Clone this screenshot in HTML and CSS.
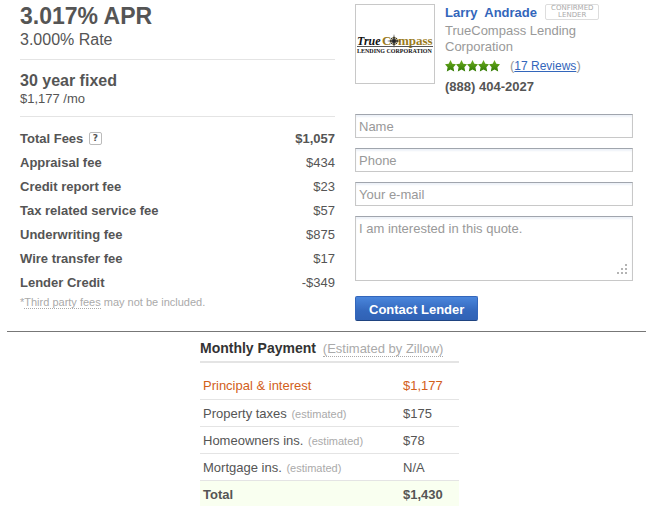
FILE: index.html
```html
<!DOCTYPE html>
<html lang="en">
	<head>
		<meta charset="utf-8">
		<title>Loan quote</title>
		<link rel="stylesheet" href="styles.css">
	</head>
	<body>
		<div class="quote">
			<!-- rate and fees -->
			<div class="loan">
				<div class="rate-box">
					<h1 class="apr">3.017% APR</h1>
					<div class="rate">3.000% Rate</div>
				</div>
				<div class="term-box">
					<h2 class="term">30 year fixed</h2>
					<div class="permonth">$1,177 /mo</div>
				</div>
				<table class="fees">
					<tr class="fees-total"><th scope="row">Total Fees <button type="button" class="help">?</button></th><td>$1,057</td></tr>
					<tr><th scope="row">Appraisal fee</th><td>$434</td></tr>
					<tr><th scope="row">Credit report fee</th><td>$23</td></tr>
					<tr><th scope="row">Tax related service fee</th><td>$57</td></tr>
					<tr><th scope="row">Underwriting fee</th><td>$875</td></tr>
					<tr><th scope="row">Wire transfer fee</th><td>$17</td></tr>
					<tr><th scope="row">Lender Credit</th><td>-$349</td></tr>
				</table>
				<div class="note">*<span class="tip">Third party fees</span> may not be included.</div>
			</div>

			<!-- lender and contact form -->
			<div class="contact">
				<div class="lender">
					<div class="logo">
						<svg width="78" height="78" viewBox="0 0 78 78" role="img" aria-label="TrueCompass Lending Corporation">
							<text class="logo-true" x="1" y="40">True</text>
							<text class="logo-compass" x="26" y="40">C</text>
							<text class="logo-compass" x="42" y="40">mpass</text>
							<circle cx="38" cy="36" r="3.5" fill="none" stroke="#6b5a20"/>
							<path d="M38 29l1 6 6 1-6 1-1 6-1-6-6-1 6-1z" fill="#222"/>
							<path d="M35 33l6 6M41 33l-6 6" stroke="#222" stroke-width="0.7"/>
							<path d="M1 41.5h76" stroke="#555"/>
							<text class="logo-sub" x="1" y="48">LENDING CORPORATION</text>
						</svg>
					</div>
					<div class="lender-info">
						<div class="name-row">
							<a class="name" href="#">Larry&nbsp; Andrade</a>
							<span class="confirmed">CONFIRMED<br>LENDER</span>
						</div>
						<div class="company">TrueCompass Lending Corporation</div>
						<div class="rating">
							<svg width="55" height="12" viewBox="0 0 55 12" role="img" aria-label="5 stars">
								<defs>
									<linearGradient id="green" x1="0" y1="0" x2="0" y2="1">
										<stop offset="0" stop-color="#6fae22"/>
										<stop offset="1" stop-color="#2f7a00"/>
									</linearGradient>
									<path id="star" d="M5.5 0L7.3 3.8 11 4.3 8.4 7.2 9.2 11.6 5.5 9.6 1.8 11.6 2.6 7.2 0 4.3 3.7 3.8z" fill="url(#green)"/>
								</defs>
								<use href="#star"/>
								<use href="#star" x="11"/>
								<use href="#star" x="22"/>
								<use href="#star" x="33"/>
								<use href="#star" x="44"/>
							</svg>
							<span class="reviews">(<a href="#">17 Reviews</a>)</span>
						</div>
						<div class="tel">(888) 404-2027</div>
					</div>
				</div>
				<form class="form">
					<input type="text" placeholder="Name" aria-label="Name">
					<input type="tel" placeholder="Phone" aria-label="Phone">
					<input type="email" placeholder="Your e-mail" aria-label="Your e-mail">
					<div class="message">
						<textarea aria-label="Message">I am interested in this quote.</textarea>
						<svg class="grip" width="10" height="10" viewBox="0 0 10 10" aria-hidden="true">
							<path d="M8 0h2v2h-2zM4 4h2v2h-2zM8 4h2v2h-2zM0 8h2v2h-2zM4 8h2v2h-2zM8 8h2v2h-2z" fill="#b4b4b4"/>
						</svg>
					</div>
					<button type="button" class="send">Contact Lender</button>
				</form>
			</div>
		</div>

		<!-- monthly payment -->
		<div class="monthly">
			<div class="payment">
				<h2 class="payment-title">Monthly Payment <span class="tip">(Estimated by Zillow)</span></h2>
				<table class="payments">
					<tr class="principal"><td>Principal &amp; interest</td><td>$1,177</td></tr>
					<tr><td>Property taxes <small>(estimated)</small></td><td>$175</td></tr>
					<tr><td>Homeowners ins. <small>(estimated)</small></td><td>$78</td></tr>
					<tr><td>Mortgage ins. <small>(estimated)</small></td><td>N/A</td></tr>
					<tr class="total"><td>Total</td><td>$1,430</td></tr>
				</table>
			</div>
		</div>
	</body>
</html>
```

FILE: styles.css
```css
*{
	box-sizing: border-box;
}
body{
	margin: 0;
	background: #fff;
	color: #555;
	font: 13px/16px "Liberation Sans", Arial, sans-serif;
}
h1,h2{
	margin: 0;
}
table{
	width: 100%;
	border-collapse: collapse;
}
a{
	color: #36b;
}

.quote{
	display: grid;
	grid-template-columns: 315fr 278fr;
	gap: 20px;
	padding: 4px 22px 10px 20px;
}

/* left column */
.rate-box{
	padding-bottom: 7px;
	border-bottom: 1px solid #e4e4e4;
}
.apr{
	font-size: 23px;
	line-height: 24px;
}
.rate{
	font-size: 16px;
	line-height: 24px;
}
.term-box{
	padding: 12px 0 9px;
	border-bottom: 1px solid #e4e4e4;
}
.term{
	font-size: 16px;
	line-height: 18px;
}
.permonth{
	line-height: 17px;
}
.fees{
	margin-top: 10px;
}
.fees th,.fees td{
	height: 24px;
	padding: 0;
	text-align: left;
}
.fees td{
	text-align: right;
}
.fees-total td{
	font-weight: bold;
}
.help{
	width: 13px;
	height: 13px;
	margin-left: 2px;
	padding: 0;
	border: 1px solid #bbb;
	border-radius: 2px;
	background: #fff;
	color: #555;
	font: bold 9px/11px "DejaVu Sans", sans-serif;
	vertical-align: 2px;
}
.note{
	font-size: 11px;
	line-height: 14px;
	color: #aaa;
}
.tip{
	border-bottom: 1px dotted #aaa;
}

/* right column */
.lender{
	display: flex;
	gap: 10px;
	margin-bottom: 17px;
}
.logo{
	flex: none;
	width: 80px;
	height: 80px;
	border: 1px solid #c8c8c8;
}
.logo svg{
	display: block;
}
.logo-true{
	font: italic bold 12px "Liberation Serif", serif;
	fill: #111;
}
.logo-compass{
	font: bold 13px "Liberation Serif", serif;
	fill: #9a7a20;
}
.logo-sub{
	font: bold 6px "Liberation Serif", serif;
	fill: #111;
}
.lender-info{
	flex: 1;
}
.name-row{
	display: flex;
	gap: 8px;
	height: 19px;
}
.name{
	font-weight: bold;
	line-height: 18px;
	text-decoration: none;
}
.confirmed{
	height: 16px;
	padding: 0 5px;
	border: 1px solid #ddd;
	border-radius: 2px;
	color: #aaa;
	font: 7px/7px "DejaVu Sans", sans-serif;
	text-align: center;
}
.company{
	max-width: 150px;
	color: #999;
}
.rating{
	display: flex;
	align-items: center;
	gap: 10px;
	height: 22px;
	color: #999;
}
.reviews a{
	font-size: 12px;
}
.tel{
	font-weight: bold;
	line-height: 20px;
}
.form input,.form textarea{
	display: block;
	width: 100%;
	padding: 3px;
	border: 1px solid #c8c8c8;
	border-top-color: #a0a5ad;
	border-radius: 0;
	background: #fff;
	box-shadow: inset 0 2px 2px #eef2f8;
	color: #999;
	font: inherit;
}
.form input{
	height: 24px;
	margin-bottom: 10px;
}
.form input::placeholder{
	color: #999;
}
.form textarea{
	height: 65px;
	resize: none;
	padding-top: 4px;
}
.message{
	position: relative;
}
.grip{
	position: absolute;
	right: 6px;
	bottom: 7px;
}
.send{
	height: 25px;
	margin-top: 15px;
	padding: 3px 13px 0;
	border: 1px solid #3366bb;
	border-bottom-color: #1f4380;
	border-radius: 2px;
	background: linear-gradient(#4a86dc, #3468bd 60%, #3062b5);
	color: #fff;
	font: bold 13px/20px "Liberation Sans", Arial, sans-serif;
}

/* bottom block */
.monthly{
	margin: 0 9px 0 7px;
	border-top: 1px solid #777;
	padding-top: 7px;
}
.payment{
	width: 259px;
	margin-left: 193px;
}
.payment-title{
	padding-bottom: 3px;
	border-bottom: 2px solid #e4e4e4;
	color: #333;
	font-size: 14px;
	line-height: 18px;
}
.payment-title .tip{
	margin-left: 3px;
	color: #aaa;
	font-size: 13px;
	font-weight: normal;
}
.payments{
	margin-top: 9px;
}
.payments td{
	height: 27px;
	padding: 2px 3px 0;
	border-bottom: 1px solid #e4e4e4;
}
.payments td + td{
	width: 59px;
}
.payments small{
	margin-left: 1px;
	color: #aaa;
	font-size: 11px;
}
.principal{
	color: #d2601a;
}
.total{
	background: #f9fff0;
	font-weight: bold;
}
.payments .total td{
	border-bottom: none;
}
```
